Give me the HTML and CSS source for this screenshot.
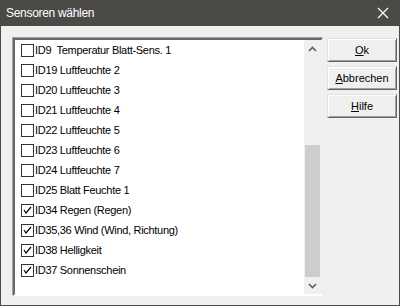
FILE: index.html
```html
<!DOCTYPE html>
<html>
<head>
<meta charset="UTF-8">
<title>Sensoren wählen</title>
<link rel="stylesheet" href="styles.css">
</head>
<body>
	<div id="fenster">
		<div class="titelleiste">
			<span class="titel">Sensoren wählen</span>
			<svg class="schliessen" width="12" height="12" viewBox="0 0 12 12"><path d="M1 1 L11 11 M11 1 L1 11" stroke="#fff" stroke-width="1.2" fill="none"/></svg>
		</div>
		<div class="inhalt">
			<div class="liste">
				<ul class="eintraege">
					<li><span class="kasten"></span>ID9&nbsp; Temperatur Blatt-Sens. 1</li>
					<li><span class="kasten"></span>ID19 Luftfeuchte 2</li>
					<li><span class="kasten"></span>ID20 Luftfeuchte 3</li>
					<li><span class="kasten"></span>ID21 Luftfeuchte 4</li>
					<li><span class="kasten"></span>ID22 Luftfeuchte 5</li>
					<li><span class="kasten"></span>ID23 Luftfeuchte 6</li>
					<li><span class="kasten"></span>ID24 Luftfeuchte 7</li>
					<li><span class="kasten"></span>ID25 Blatt Feuchte 1</li>
					<li><span class="kasten"><svg width="11" height="11" viewBox="0 0 11 11"><path d="M2 5 L4 8 L9 2" stroke="#000" stroke-width="1.2" fill="none"/></svg></span>ID34 Regen (Regen)</li>
					<li><span class="kasten"><svg width="11" height="11" viewBox="0 0 11 11"><path d="M2 5 L4 8 L9 2" stroke="#000" stroke-width="1.2" fill="none"/></svg></span>ID35,36 Wind (Wind, Richtung)</li>
					<li><span class="kasten"><svg width="11" height="11" viewBox="0 0 11 11"><path d="M2 5 L4 8 L9 2" stroke="#000" stroke-width="1.2" fill="none"/></svg></span>ID38 Helligkeit</li>
					<li><span class="kasten"><svg width="11" height="11" viewBox="0 0 11 11"><path d="M2 5 L4 8 L9 2" stroke="#000" stroke-width="1.2" fill="none"/></svg></span>ID37 Sonnenschein</li>
				</ul>
				<div class="rollbalken">
					<div class="pfeil"><svg width="9" height="6" viewBox="0 0 9 6"><path d="M1 5 L4.5 1.5 L8 5" stroke="#606060" stroke-width="1.6" fill="none"/></svg></div>
					<div class="spur"><div class="daumen"></div></div>
					<div class="pfeil"><svg width="9" height="6" viewBox="0 0 9 6"><path d="M1 1 L4.5 4.5 L8 1" stroke="#606060" stroke-width="1.6" fill="none"/></svg></div>
				</div>
			</div>
			<div class="knoepfe">
				<button class="knopf"><u>O</u>k</button>
				<button class="knopf"><u>A</u>bbrechen</button>
				<button class="knopf"><u>H</u>ilfe</button>
			</div>
		</div>
	</div>
</body>
</html>
```
FILE: styles.css
```css
html, body{
	margin:0;
	padding:0;
}

body{
	font: 11px "Liberation Sans", Arial, sans-serif;
	background:#f0f0f0;
}

div#fenster{
	width:398px;
	height:305px;
	border:1px solid #4b4a47;
	border-top:none;
	display:flex;
	flex-direction:column;
}

.titelleiste{
	height:26px;
	background:#4b4a47;
	color:#fff;
	display:flex;
	align-items:center;
	justify-content:space-between;
	padding:0 10px 0 5px;
	font-size:12px;
	letter-spacing:-0.3px;
}

.inhalt{
	flex:1;
	display:flex;
	padding:12px 2px 9px 12px;
	gap:4px;
	align-items:flex-start;
}

.liste{
	width:306px;
	height:254px;
	background:#fff;
	border:2px solid;
	border-color:#696969 #f0f0f0 #fff #696969;
	box-shadow:-1px -1px 0 #a0a0a0;
	display:flex;
}

.eintraege{
	flex:1;
	list-style:none;
	margin:0;
	padding:0;
	letter-spacing:-0.3px;
}

.eintraege li{
	height:20px;
	display:flex;
	align-items:center;
	padding-left:6px;
	color:#000;
}

.kasten{
	width:11px;
	height:11px;
	border:1px solid #333;
	background:#fff;
	margin-right:1px;
	display:inline-flex;
}

.rollbalken{
	width:17px;
	display:flex;
	flex-direction:column;
	background:#f0f0f0;
}

.pfeil{
	height:17px;
	display:flex;
	align-items:center;
	justify-content:center;
}

.spur{
	flex:1;
	display:flex;
	flex-direction:column;
	justify-content:flex-end;
}

.daumen{
	height:132px;
	margin:0 1px;
	background:#cdcdcd;
}

.knoepfe{
	display:flex;
	flex-direction:column;
	gap:4px;
}

.knopf{
	width:70px;
	height:24px;
	font:11px "Liberation Sans", Arial, sans-serif;
	color:#000;
	background:#f0f0f0;
	border:1px solid;
	border-color:#e3e3e3 #646464 #646464 #e3e3e3;
	box-shadow:inset 1px 1px 0 #fff, inset -1px -1px 0 #a0a0a0;
	padding:0;
}
```
